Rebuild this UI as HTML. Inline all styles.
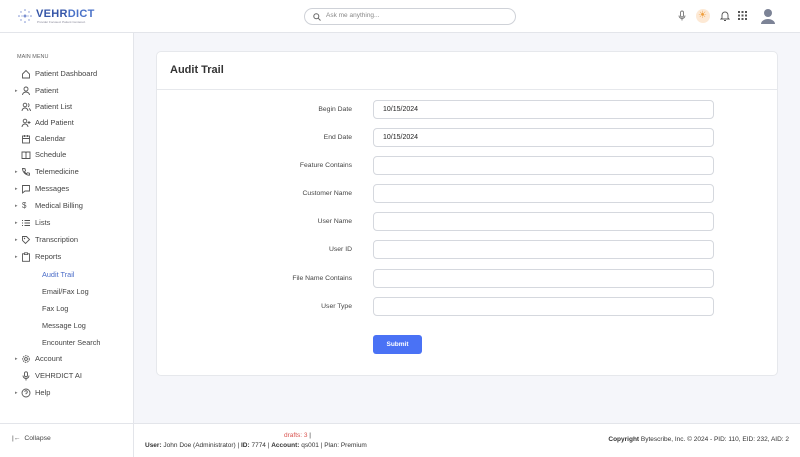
<!DOCTYPE html>
<html><head><meta charset="utf-8"><style>
*{box-sizing:border-box;margin:0;padding:0}
body{width:800px;height:457px;overflow:hidden;font-family:"Liberation Sans",sans-serif;background:#f5f6fa;position:relative;color:#333}
.hdr{position:absolute;left:0;top:0;width:800px;height:33px;background:#fff;border-bottom:1px solid #e3e5ea}
.side{position:absolute;left:0;top:33px;width:134px;height:424px;background:#fff;border-right:1px solid #e3e5ea}
.mi{position:absolute;left:0;font-size:7.5px;color:#444;height:12px;line-height:12px;white-space:nowrap}
.mi .ar{position:absolute;left:15px;font-size:5px;color:#777}
.mi svg{position:absolute;left:21px;top:1px}
.mi .t{position:absolute;left:35px}
.sub{position:absolute;left:42px;font-size:7.3px;color:#444}
.card{position:absolute;left:156px;top:51px;width:622px;height:325px;background:#fff;border:1px solid #e6e8ec;border-radius:5px}
.card h1{font-size:11px;font-weight:bold;color:#333;position:absolute;left:13px;top:12px}
.card .hl{position:absolute;left:0;top:37px;width:100%;border-top:1px solid #e6e8ec}
.lab{position:absolute;right:448px;font-size:6.8px;color:#444;text-align:right}
.inp{position:absolute;left:373px;width:341px;height:19px;border:1px solid #d5d8de;border-radius:4px;background:#fff;font-size:7px;padding-left:9px;line-height:17px;color:#222}
.btn{position:absolute;left:373px;top:335px;width:49px;height:19px;background:#4a72f5;border-radius:3px;color:#fff;font-size:6.5px;font-weight:bold;text-align:center;line-height:19px}
.foot{position:absolute;left:134px;top:423px;width:666px;height:34px;background:#fff;border-top:1px solid #e3e5ea;font-size:6.5px;color:#333}
</style></head><body>
<div class="hdr">
 <svg style="position:absolute;left:17px;top:8px" width="16" height="16"><g fill="#7a8fd0"><circle cx="8" cy="8" r="1.5"/><circle cx="8" cy="2" r=".8"/><circle cx="8" cy="14" r=".8"/><circle cx="2" cy="8" r=".8"/><circle cx="14" cy="8" r=".8"/><circle cx="4" cy="4" r=".7"/><circle cx="12" cy="4" r=".7"/><circle cx="4" cy="12" r=".7"/><circle cx="12" cy="12" r=".7"/><circle cx="5" cy="8" r=".6"/><circle cx="11" cy="8" r=".6"/></g></svg>
 <div style="position:absolute;left:36px;top:8px;font-size:11px;font-weight:bold;color:#3656a8;letter-spacing:.3px">VEHR<span style="color:#4a72c8">DICT</span></div>
 <div style="position:absolute;left:37px;top:20px;font-size:3px;color:#889">Provider Focused. Patient Centered.</div>
 <div style="position:absolute;left:304px;top:8px;width:212px;height:17px;border:1px solid #cfd2d8;border-radius:9px;background:#fff">
  <svg style="position:absolute;left:8px;top:4px" width="8" height="8"><circle cx="3.3" cy="3.3" r="2.5" fill="none" stroke="#666" stroke-width="1"/><path d="M5.2 5.2L7.5 7.5" stroke="#666"/></svg>
  <span style="position:absolute;left:21px;top:3px;font-size:6.5px;color:#888">Ask me anything...</span></div>
 <svg style="position:absolute;left:678px;top:10px" width="8" height="12"><rect x="2.5" y="1" width="3" height="6" rx="1.5" fill="none" stroke="#777" stroke-width=".9"/><path d="M1 5.5a3 3 0 0 0 6 0M4 8.5v2" fill="none" stroke="#777" stroke-width=".9"/></svg>
 <div style="position:absolute;left:696px;top:9px;width:14px;height:14px;border-radius:7px;background:#fde9d5"></div>
 <div style="position:absolute;left:698px;top:9px;font-size:10px;color:#f0a040;line-height:14px">☀</div>
 <svg style="position:absolute;left:720px;top:10px" width="10" height="12"><path d="M2 8V5a3 3 0 0 1 6 0v3l1 1H1z M4 10.5h2" fill="none" stroke="#555" stroke-width=".9"/></svg>
 <svg style="position:absolute;left:738px;top:11px" width="9" height="9"><g fill="#555"><rect x="0" y="0" width="2" height="2"/><rect x="3.5" y="0" width="2" height="2"/><rect x="7" y="0" width="2" height="2"/><rect x="0" y="3.5" width="2" height="2"/><rect x="3.5" y="3.5" width="2" height="2"/><rect x="7" y="3.5" width="2" height="2"/><rect x="0" y="7" width="2" height="2"/><rect x="3.5" y="7" width="2" height="2"/><rect x="7" y="7" width="2" height="2"/></g></svg>
 <svg style="position:absolute;left:760px;top:8px" width="16" height="17"><circle cx="8" cy="5" r="4" fill="#7c8396"/><path d="M1 16a7 5 0 0 1 14 0z" fill="#7c8396"/></svg>
</div>
<div class="side">
 <div style="position:absolute;left:17px;top:21px;font-size:5.5px;color:#666">MAIN MENU</div>
 <div class="mi" style="top:35px"><svg width="10" height="10"><path d="M1.5 5L5 1.5 8.5 5V9h-7z" fill="none" stroke="#555" stroke-width=".9"/></svg><span class="t">Patient Dashboard</span></div>
 <div class="mi" style="top:52px"><span class="ar">▸</span><svg width="10" height="10"><circle cx="5" cy="3" r="2" fill="none" stroke="#555" stroke-width=".9"/><path d="M1.5 9a3.5 3 0 0 1 7 0" fill="none" stroke="#555" stroke-width=".9"/></svg><span class="t">Patient</span></div>
 <div class="mi" style="top:68px"><svg width="10" height="10"><circle cx="4" cy="3" r="1.8" fill="none" stroke="#555" stroke-width=".9"/><path d="M1 9a3 3 0 0 1 6 0M7 1.5a1.8 1.8 0 0 1 0 3.3M8 6.5a3 3 0 0 1 1.5 2.5" fill="none" stroke="#555" stroke-width=".9"/></svg><span class="t">Patient List</span></div>
 <div class="mi" style="top:84px"><svg width="10" height="10"><circle cx="4" cy="3" r="1.8" fill="none" stroke="#555" stroke-width=".9"/><path d="M1 9a3 3 0 0 1 6 0M8 3v3M6.5 4.5h3" fill="none" stroke="#555" stroke-width=".9"/></svg><span class="t">Add Patient</span></div>
 <div class="mi" style="top:100px"><svg width="10" height="10"><rect x="1.5" y="2" width="7" height="7" fill="none" stroke="#555" stroke-width=".9"/><path d="M1.5 4.5h7M3.5 1v2M6.5 1v2" stroke="#555" stroke-width=".9"/></svg><span class="t">Calendar</span></div>
 <div class="mi" style="top:116px"><svg width="10" height="10"><path d="M1 2h3.5l.5 1 .5-1H9v6.5H1zM5 3v6" fill="none" stroke="#555" stroke-width=".9"/></svg><span class="t">Schedule</span></div>
 <div class="mi" style="top:133px"><span class="ar">▸</span><svg width="10" height="10"><path d="M2 1.5l2 .2.5 2-1 1a5 5 0 0 0 2 2l1-1 2 .5v2a7 7 0 0 1-7-6.7z" fill="none" stroke="#555" stroke-width=".9"/></svg><span class="t">Telemedicine</span></div>
 <div class="mi" style="top:150px"><span class="ar">▸</span><svg width="10" height="10"><path d="M1.5 1.5h7v5.5H4L1.5 9z" fill="none" stroke="#555" stroke-width=".9"/></svg><span class="t">Messages</span></div>
 <div class="mi" style="top:167px"><span class="ar">▸</span><span style="position:absolute;left:22px;font-size:8px;color:#555">$</span><span class="t">Medical Billing</span></div>
 <div class="mi" style="top:184px"><span class="ar">▸</span><svg width="10" height="10"><path d="M1 2.5h1M3.5 2.5h5.5M1 5h1M3.5 5h5.5M1 7.5h1M3.5 7.5h5.5" stroke="#555" stroke-width=".9"/></svg><span class="t">Lists</span></div>
 <div class="mi" style="top:201px"><span class="ar">▸</span><svg width="10" height="10"><path d="M1.5 1.5h4l3 3-4 4-3-3z" fill="none" stroke="#555" stroke-width=".9"/><circle cx="3.5" cy="3.5" r=".7" fill="#555"/></svg><span class="t">Transcription</span></div>
 <div class="mi" style="top:218px"><span class="ar">▸</span><svg width="10" height="10"><rect x="1.5" y="1.8" width="7" height="7.5" fill="none" stroke="#555" stroke-width=".9"/><rect x="3.5" y=".8" width="3" height="1.8" fill="#fff" stroke="#555" stroke-width=".8"/></svg><span class="t">Reports</span></div>
 <div class="sub" style="top:237px;color:#4a6cc8">Audit Trail</div>
 <div class="sub" style="top:254px">Email/Fax Log</div>
 <div class="sub" style="top:271px">Fax Log</div>
 <div class="sub" style="top:288px">Message Log</div>
 <div class="sub" style="top:305px">Encounter Search</div>
 <div class="mi" style="top:320px"><span class="ar">▸</span><svg width="10" height="10"><circle cx="5" cy="5" r="3.3" fill="none" stroke="#555" stroke-width=".9" stroke-dasharray="1.6 .8"/><circle cx="5" cy="5" r="1.4" fill="none" stroke="#555" stroke-width=".9"/></svg><span class="t">Account</span></div>
 <div class="mi" style="top:337px"><svg width="10" height="10"><rect x="3.5" y=".8" width="3" height="5" rx="1.5" fill="none" stroke="#555" stroke-width=".9"/><path d="M2 4.5a3 3 0 0 0 6 0M5 7.5v2" fill="none" stroke="#555" stroke-width=".9"/></svg><span class="t">VEHRDICT AI</span></div>
 <div class="mi" style="top:354px"><span class="ar">▸</span><svg width="10" height="10"><circle cx="5" cy="5" r="4" fill="none" stroke="#555" stroke-width=".9"/><path d="M3.7 3.8a1.3 1.3 0 1 1 1.3 1.5v1" fill="none" stroke="#555" stroke-width=".8"/></svg><span class="t">Help</span></div>
 <div style="position:absolute;left:0;top:390px;width:134px;border-top:1px solid #e3e5ea"></div>
 <div style="position:absolute;left:12px;top:402px;font-size:6.8px;color:#444">|← &nbsp;Collapse</div>
</div>
<div class="card"><h1>Audit Trail</h1><div class="hl"></div></div>
<div class="lab" style="top:106px">Begin Date</div><div class="inp" style="top:100px">10/15/2024</div>
<div class="lab" style="top:134px">End Date</div><div class="inp" style="top:128px">10/15/2024</div>
<div class="lab" style="top:162px">Feature Contains</div><div class="inp" style="top:156px"></div>
<div class="lab" style="top:190px">Customer Name</div><div class="inp" style="top:184px"></div>
<div class="lab" style="top:218px">User Name</div><div class="inp" style="top:212px"></div>
<div class="lab" style="top:246px">User ID</div><div class="inp" style="top:240px"></div>
<div class="lab" style="top:275px">File Name Contains</div><div class="inp" style="top:269px"></div>
<div class="lab" style="top:303px">User Type</div><div class="inp" style="top:297px"></div>
<div class="btn">Submit</div>
<div class="foot">
 <div style="position:absolute;left:150px;top:8px;color:#d9534f">drafts: 3 <span style="color:#333">|</span></div>
 <div style="position:absolute;left:11px;top:18px"><b>User:</b> John Doe (Administrator) | <b>ID:</b> 7774 | <b>Account:</b> qs001 | Plan: Premium</div>
 <div style="position:absolute;right:11px;top:12px"><b>Copyright</b> Bytescribe, Inc. © 2024 - PID: 110, EID: 232, AID: 2</div>
</div>
</body></html>
